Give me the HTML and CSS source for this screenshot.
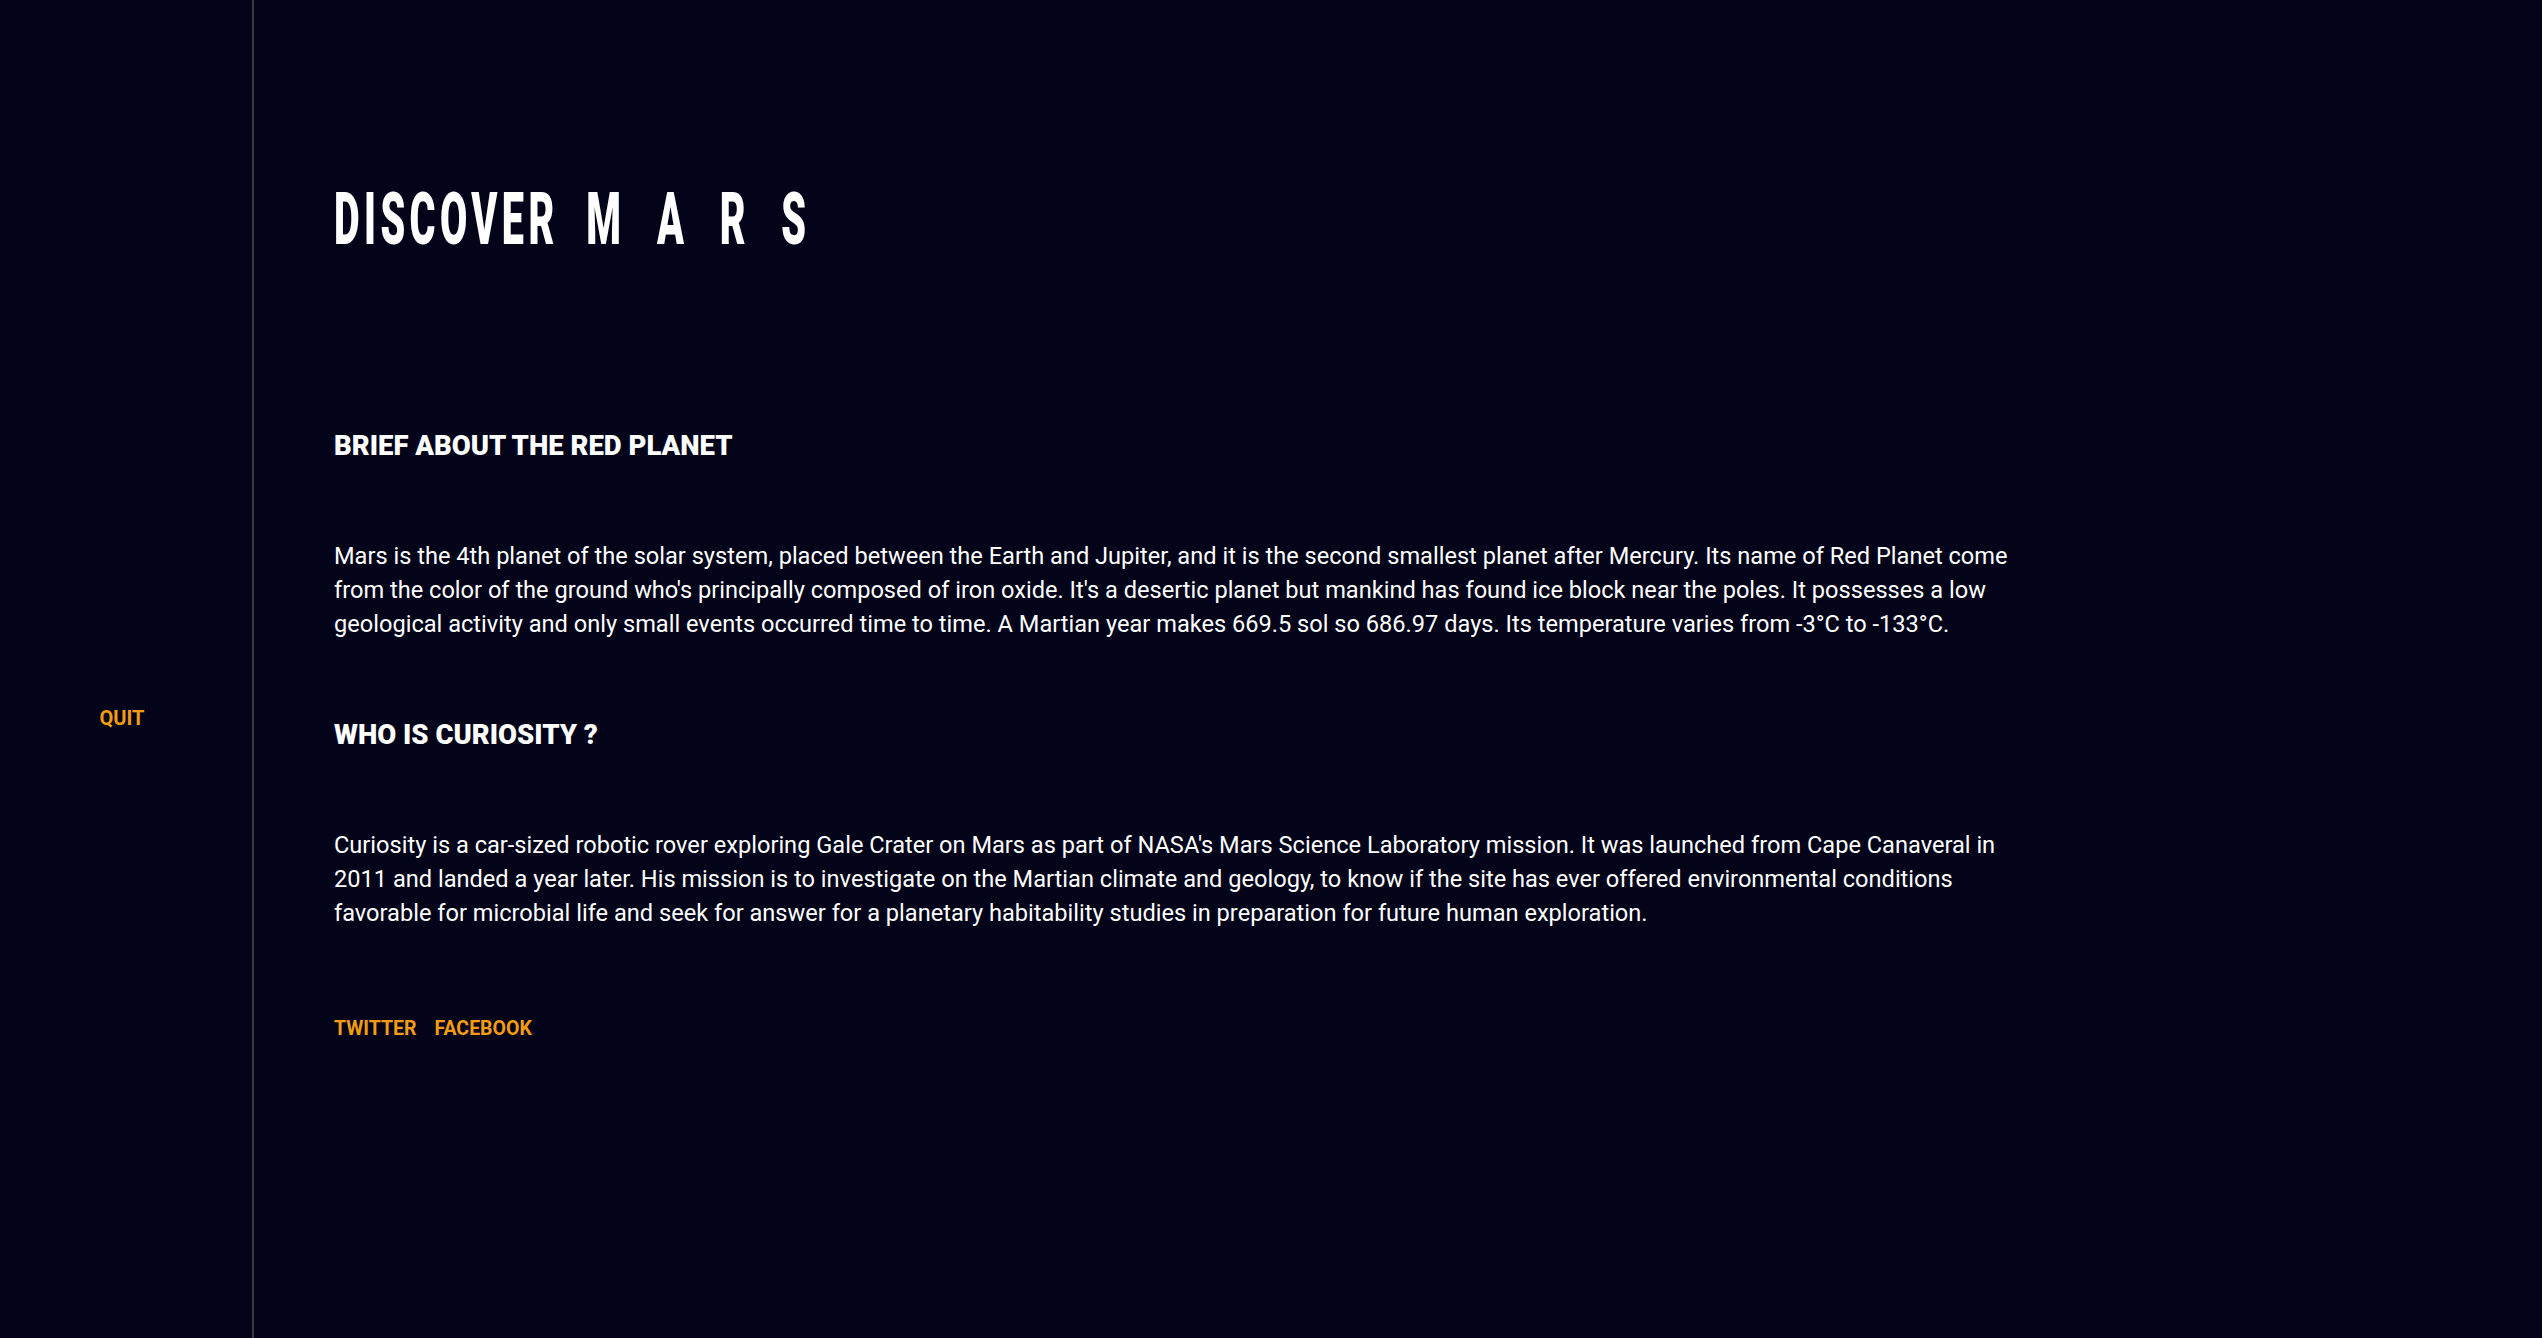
FILE: index.html
```html
<!DOCTYPE html>
<html lang="en">
<head>
<meta charset="utf-8">
<title>Discover Mars</title>
<link rel="stylesheet" href="styles.css">
</head>
<body>
<div class="page">
  <aside class="sidebar">
    <a class="quit" href="#">QUIT</a>
  </aside>
  <main class="content">
    <h1 class="title"><span class="title-inner"><span class="w1">DISCOVER</span><span class="w2">MARS</span></span></h1>
    <h2 class="heading first">BRIEF ABOUT THE RED PLANET</h2>
    <p class="text">Mars is the 4th planet of the solar system, placed between the Earth and Jupiter, and it is the second smallest planet after Mercury. Its name of Red Planet come from the color of the ground who's principally composed of iron oxide. It's a desertic planet but mankind has found ice block near the poles. It possesses a low geological activity and only small events occurred time to time. A Martian year makes 669.5 sol so 686.97 days. Its temperature varies from -3°C to -133°C.</p>
    <h2 class="heading">WHO IS CURIOSITY ?</h2>
    <p class="text">Curiosity is a car-sized robotic rover exploring Gale Crater on Mars as part of NASA's Mars Science Laboratory mission. It was launched from Cape Canaveral in 2011 and landed a year later. His mission is to investigate on the Martian climate and geology, to know if the site has ever offered environmental conditions favorable for microbial life and seek for answer for a planetary habitability studies in preparation for future human exploration.</p>
    <nav class="links">
      <a href="#">TWITTER</a>
      <a href="#">FACEBOOK</a>
    </nav>
  </main>
</div>
</body>
</html>
```

FILE: styles.css
```css
html, body {
  margin: 0;
  padding: 0;
  height: 100%;
}
body {
  background: #03041a;
  color: #ffffff;
  font-family: Roboto, "Liberation Sans", sans-serif;
}
.page {
  display: flex;
  min-height: 100vh;
}
.sidebar {
  width: 252px;
  flex: 0 0 252px;
  border-right: 2px solid #3a3a40;
  display: flex;
  flex-direction: column;
  align-items: center;
  padding-top: 707px;
  box-sizing: content-box;
}
.quit {
  color: #f39c12;
  font-weight: 700;
  font-size: 20px;
  line-height: 22px;
  text-decoration: none;
  margin-left: -8px;
}
.content {
  padding-left: 80px;
  padding-top: 184px;
  flex: 1;
}
.title {
  margin: 0;
  height: 72px;
  font-size: 72px;
  line-height: 72px;
  font-weight: 900;
  white-space: nowrap;
}
.title-inner {
  display: inline-block;
  transform: scaleX(0.55);
  transform-origin: left center;
}
.w1 {
  letter-spacing: 8px;
}
.w2 {
  letter-spacing: 65px;
  margin-left: 50px;
}
.heading {
  margin: 0;
  font-size: 27.5px;
  line-height: 32px;
  font-weight: 900;
  margin-top: 78px;
}
.heading.first {
  margin-top: 174px;
}
.text {
  margin: 77px 0 0 0;
  width: 1710px;
  font-size: 23.6px;
  line-height: 34px;
  font-weight: 400;
}
.links {
  margin-top: 88px;
  display: flex;
  gap: 18px;
}
.links a {
  color: #f39c12;
  font-weight: 700;
  font-size: 19.5px;
  line-height: 22px;
  text-decoration: none;
}
```
